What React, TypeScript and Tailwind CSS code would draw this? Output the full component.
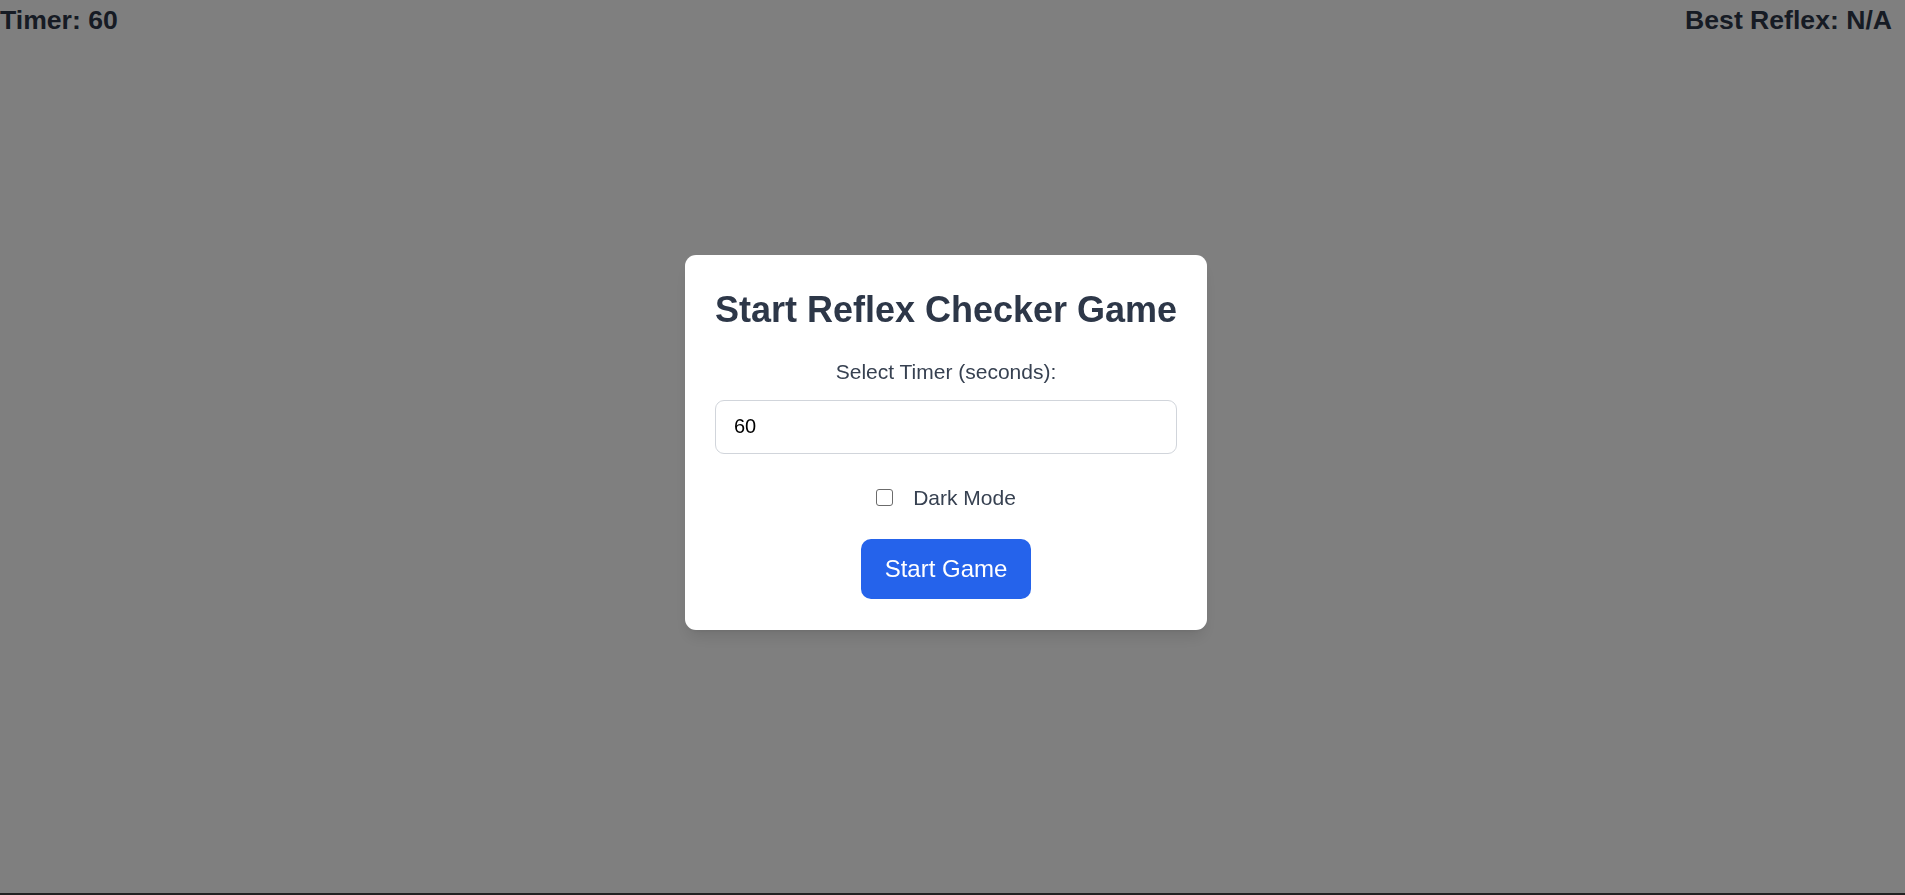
import React, { useState } from "react";

export default function App() {
  const [timer, setTimer] = useState("60");
  const [dark, setDark] = useState(false);
  return (
    <div
      className="min-h-screen bg-white relative"
      style={{ fontFamily: '"Liberation Sans", Arial, Helvetica, sans-serif' }}
    >
      <div className="flex justify-between pr-[13px] text-[26.6px] leading-[41px] font-bold text-[#2d3748]">
        <span>Timer: {timer || "60"}</span>
        <span>Best Reflex: N/A</span>
      </div>

      <div className="fixed inset-0 bg-black/50 flex items-center justify-center pr-[13px] pb-[11px]">
        <div className="bg-white rounded-[11px] shadow-lg px-[30px] pt-[35px] pb-[31px] flex flex-col items-center">
          <h2 className="text-[36px] leading-[40px] font-bold text-[#2d3748] whitespace-nowrap">
            Start Reflex Checker Game
          </h2>
          <label className="mt-[28px] text-[21px] leading-[28px] text-[#374151]">
            Select Timer (seconds):
          </label>
          <input
            type="number"
            value={timer}
            onChange={(e) => setTimer(e.target.value)}
            className="mt-[14px] w-full h-[54px] border border-[#d1d5db] rounded-[9px] px-[18px] text-[20px] text-black outline-none"
          />
          <label className="mt-[30px] h-[28px] flex items-center text-[21px] text-[#374151] cursor-pointer">
            <input
              type="checkbox"
              checked={dark}
              onChange={(e) => setDark(e.target.checked)}
              className="appearance-none w-[17px] h-[17px] border border-[#6b6b6b] rounded-[3px] bg-white mr-[20px] checked:bg-[#2563eb]"
            />
            Dark Mode
          </label>
          <button className="mt-[27px] h-[60px] px-[24px] bg-[#2563eb] text-white text-[24px] rounded-[10px]">
            Start Game
          </button>
        </div>
        <div className="absolute left-0 right-0 bottom-0 h-[2px] bg-[#222222]" />
      </div>
    </div>
  );
}
